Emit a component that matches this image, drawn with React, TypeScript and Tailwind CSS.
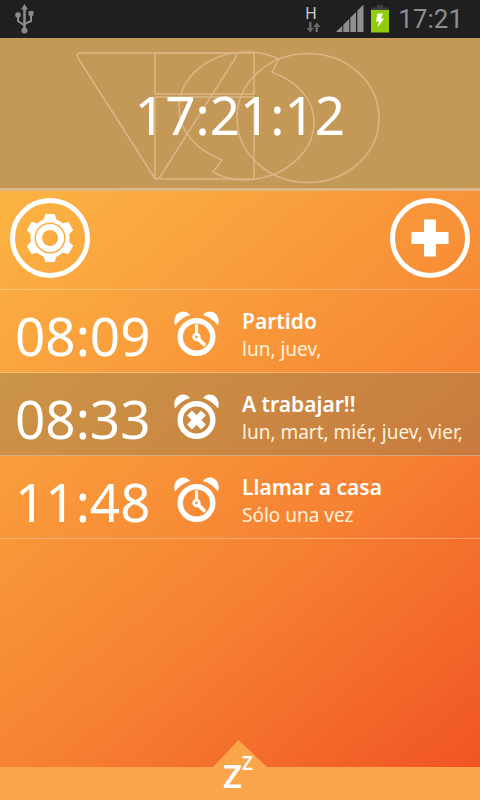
import React, { useState } from "react";

const INITIAL_ALARMS = [
  { id: 1, time: "08:09", name: "Partido", days: "lun, juev,", enabled: true },
  { id: 2, time: "08:33", name: "A trabajar!!", days: "lun, mart, miér, juev, vier,", enabled: false },
  { id: 3, time: "11:48", name: "Llamar a casa", days: "Sólo una vez", enabled: true },
];

export default function App() {
  const [alarms, setAlarms] = useState(INITIAL_ALARMS);

  const toggleAlarm = (id: number) => {
    setAlarms(alarms.map((a) => (a.id === id ? { ...a, enabled: !a.enabled } : a)));
  };

  return (
    <div className="min-h-screen flex flex-col font-['Noto_Sans',sans-serif] text-white">
      <StatusBar />

      {/* Clock */}
      <header className="relative flex justify-center bg-[#c49857] border-b-3 border-[#dfb688] pt-[41px] pb-[37px]">
        <Watermark />
        <h1 className="relative text-[53px] leading-[72px]">17:21:12</h1>
      </header>

      <main className="flex-1 flex flex-col bg-[linear-gradient(140deg,#fbb142_4%,#f68333_58%,#f15524_96%)]">
        {/* Toolbar */}
        <div className="flex justify-between px-[10px] pt-[7px] pb-[11px]">
          <button
            aria-label="Ajustes"
            className="w-20 h-20 rounded-full border-5 border-white flex items-center justify-center"
          >
            <GearIcon />
          </button>
          <button
            aria-label="Nueva alarma"
            className="w-20 h-20 rounded-full border-5 border-white flex items-center justify-center"
          >
            <PlusIcon />
          </button>
        </div>

        {/* Alarm list */}
        <ul className="flex-1 border-t border-white/30">
          {alarms.map((alarm) => (
            <AlarmRow key={alarm.id} alarm={alarm} onToggle={() => toggleAlarm(alarm.id)} />
          ))}
        </ul>

        {/* Snooze tab */}
        <footer className="relative bg-[#faa54a] h-[33px] flex justify-center">
          <svg
            className="absolute left-1/2 -translate-x-1/2 bottom-full"
            width="54"
            height="27"
            viewBox="0 0 54 27"
            fill="#faa54a"
            aria-hidden="true"
          >
            <path d="M0 27 L25.5 0 L54 27 Z" />
          </svg>
          <button aria-label="Siesta" className="relative -mt-[14px] h-[46px] pr-1 flex items-start font-semibold">
            <span className="text-[33px] leading-[46px]">Z</span>
            <span className="text-[19px] leading-5">Z</span>
          </button>
        </footer>
      </main>
    </div>
  );
}

function AlarmRow({ alarm, onToggle }: any) {
  return (
    <li
      className={`grid grid-cols-[174px_68px_1fr] items-center h-[83px] border-b border-white/30 ${
        alarm.enabled ? "" : "bg-[#7e7b57]/37"
      }`}
    >
      <span className="pl-[15px] pt-[10px] text-[53px] leading-[72px]">{alarm.time}</span>
      <button aria-label={`Activar ${alarm.name}`} onClick={onToggle} className="w-[46px] pt-[6px]">
        <AlarmIcon enabled={alarm.enabled} />
      </button>
      <div className="pt-2 whitespace-nowrap">
        <h2 className="text-[21px] leading-7 font-semibold">{alarm.name}</h2>
        <p className="text-[19px] leading-7 text-[#fff3dc]">{alarm.days}</p>
      </div>
    </li>
  );
}

function StatusBar() {
  return (
    <div className="h-[38px] bg-[#1f1f1f] flex items-center justify-between pl-[14px] pr-[17px] font-[Roboto,sans-serif]">
      <svg width="21" height="30" viewBox="0 0 21 30" fill="none" stroke="#8c8c8c" strokeWidth="2" aria-hidden="true">
        <path d="M10.5 4 V26" strokeWidth="2.6" />
        <path d="M4 11 V17 L10.5 21.5 M17 9 V17 L10.5 20" />
        <path d="M10.5 0 L14 5.5 H7 Z" fill="#8c8c8c" stroke="none" />
        <circle cx="4" cy="11" r="2.8" fill="#8c8c8c" stroke="none" />
        <rect x="14.5" y="7" width="5" height="4.6" fill="#8c8c8c" stroke="none" />
        <circle cx="10.5" cy="26.5" r="3" fill="#8c8c8c" stroke="none" />
      </svg>

      <div className="flex items-center">
        <div className="flex flex-col mr-[14px]">
          <span className="text-base leading-4 text-[#c8c8c8]">H</span>
          <svg width="17" height="11" viewBox="0 0 17 11" fill="#6a6a6a" aria-hidden="true">
            <path d="M4 0 H6.5 V6 H9 L5.2 10.5 L1.5 6 H4 Z" />
            <path d="M10.5 10 H13 V5 H15.7 L11.8 0.5 L8 5 H10.5 Z" />
          </svg>
        </div>
        <svg className="mr-[7px]" width="28" height="28" viewBox="0 0 28 28" fill="#8f8f8f" aria-hidden="true">
          <path d="M0 27 L6.3 20.7 V27 Z M7.3 19.7 L13.3 13.7 V27 H7.3 Z M14.3 12.7 L20 7 V27 H14.3 Z M21.3 5.7 L27 0 H27.5 V27 H21.3 Z" />
        </svg>
        <svg className="mr-[9px]" width="18" height="28" viewBox="0 0 18 28" aria-hidden="true">
          <rect x="6" y="0" width="6" height="3" fill="#3d3d3d" />
          <rect x="0" y="2.5" width="18" height="2.5" fill="#3d3d3d" />
          <rect x="0" y="5" width="18" height="22.5" fill="#92cc0a" />
          <path d="M6.5 8.5 H12 L9.8 13.5 H13.2 L6.5 22.5 L8 16.5 H5 Z" fill="#fff" />
        </svg>
        <span className="text-[26px] leading-[38px] text-[#8f8f8f]">17:21</span>
      </div>
    </div>
  );
}

function Watermark() {
  return (
    <svg
      className="absolute inset-0 w-full h-full"
      viewBox="0 0 480 150"
      fill="none"
      stroke="#dab787"
      strokeWidth="1.5"
      strokeLinejoin="round"
      aria-hidden="true"
    >
      <path d="M80 15 H234 Q238 15 236 19 L160 139 Q157 142 154 139 L78 20 Q76 15 80 15 Z" />
      <path d="M155 15 H254 V56 H155 Z" />
      <path d="M155 59 H254 V141 H155 Z" />
      <path d="M279 21 C268 16 257 14 247 14 C209 14 179 39 179 70 C179 94 197 112 222 122 L213 134 C222 139 233 142 243 142 C283 142 314 115 314 84 C314 62 298 44 272 34 Z" />
      <ellipse cx="308" cy="80" rx="71" ry="64.5" />
    </svg>
  );
}

function GearIcon() {
  return (
    <svg width="48" height="48" viewBox="-24 -24 48 48" fill="#fff" aria-hidden="true">
      {[0, 60, 120, 180, 240, 300].map((deg) => (
        <path key={deg} d="M-4.7 -24 H4.7 L7 -16.5 H-7 Z" transform={`rotate(${deg})`} />
      ))}
      <circle r="17.5" fill="none" stroke="#fff" strokeWidth="4" />
      <circle r="11" fill="none" stroke="#fff" strokeWidth="6" />
    </svg>
  );
}

function PlusIcon() {
  return (
    <svg width="38" height="38" viewBox="0 0 38 38" fill="#fff" aria-hidden="true">
      <path d="M13 0.5 H25 V13 H37.5 V25 H25 V37.5 H13 V25 H0.5 V13 H13 Z" />
    </svg>
  );
}

function AlarmIcon({ enabled }: any) {
  return (
    <svg width="46" height="46" viewBox="0 0 46 46" fill="none" stroke="#fff" aria-hidden="true">
      <path d="M1 14.5 C-1.5 7 3 0.5 9 0.5 C12 0.5 14.5 2 16 4 C9.5 6 4.5 10 1 14.5 Z" fill="#fff" stroke="none" />
      <path d="M44 14.5 C46.5 7 42 0.5 36 0.5 C33 0.5 30.5 2 29 4 C35.5 6 40.5 10 44 14.5 Z" fill="#fff" stroke="none" />
      <circle cx="22.5" cy="26" r="16.3" strokeWidth="5.4" />
      {enabled ? (
        <>
          <path d="M22.5 14.5 V23" strokeWidth="3.2" strokeLinecap="round" />
          <path d="M24.5 28 L30 33.5" strokeWidth="3.8" strokeLinecap="round" />
          <circle cx="22.5" cy="26" r="2.8" strokeWidth="2.8" />
        </>
      ) : (
        <path d="M15.5 19 L29.5 33 M29.5 19 L15.5 33" strokeWidth="6.8" />
      )}
    </svg>
  );
}
